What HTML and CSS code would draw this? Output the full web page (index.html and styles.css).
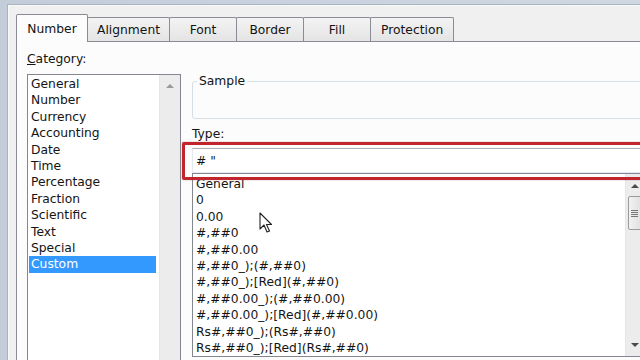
FILE: index.html
```html
<!DOCTYPE html>
<html lang="en">
<head>
  <meta charset="UTF-8" />
  <title>Format Cells</title>
  <link rel="stylesheet" href="styles.css">
</head>
<body>
  <div class="frame">
    <div class="dialog">
      <div class="tabs">
        <div class="tab active">Number</div>
        <div class="tab">Alignment</div>
        <div class="tab">Font</div>
        <div class="tab">Border</div>
        <div class="tab">Fill</div>
        <div class="tab">Protection</div>
      </div>

      <div class="panel">
        <div class="category">
          <div class="label"><u>C</u>ategory:</div>
          <div class="listbox cat-list">
            <ul class="items">
              <li>General</li>
              <li>Number</li>
              <li>Currency</li>
              <li>Accounting</li>
              <li>Date</li>
              <li>Time</li>
              <li>Percentage</li>
              <li>Fraction</li>
              <li>Scientific</li>
              <li>Text</li>
              <li>Special</li>
              <li class="selected">Custom</li>
            </ul>
            <div class="scrollbar">
              <span class="arrow up"></span>
            </div>
          </div>
        </div>

        <div class="format">
          <fieldset class="sample">
            <legend>Sample</legend>
            <div class="sample-body"></div>
          </fieldset>

          <div class="label type-label">Type:</div>
          <div class="type-field">
            <input class="type-input" type="text" value='# "'>
            <div class="marker"></div>
          </div>

          <div class="listbox type-list">
            <ul class="items">
              <li>General</li>
              <li>0</li>
              <li>0.00</li>
              <li>#,##0</li>
              <li>#,##0.00</li>
              <li>#,##0_);(#,##0)</li>
              <li>#,##0_);[Red](#,##0)</li>
              <li>#,##0.00_);(#,##0.00)</li>
              <li>#,##0.00_);[Red](#,##0.00)</li>
              <li>Rs#,##0_);(Rs#,##0)</li>
              <li>Rs#,##0_);[Red](Rs#,##0)</li>
            </ul>
            <div class="scrollbar">
              <span class="arrow up"></span>
              <span class="thumb"><i></i><i></i><i></i><i></i></span>
              <span class="arrow down"></span>
            </div>
          </div>
        </div>
      </div>
    </div>

    <svg class="cursor" width="14" height="22" viewBox="0 0 14 22">
      <path d="M1 1 L1 17 L5 13 L8 20 L10.5 19 L7.5 12.5 L12.5 12.5 Z" fill="#fff" stroke="#222" stroke-width="1.1" stroke-linejoin="round"/>
    </svg>
  </div>
</body>
</html>
```

FILE: styles.css
```css
body {
  margin: 0;
  width: 640px;
  height: 360px;
  overflow: hidden;
  font-family: "DejaVu Sans", "Liberation Sans", sans-serif;
  font-size: 12.3px;
  color: #141414;
  background: #c8d1dd;
}

.frame {
  position: relative;
  height: 360px;
  padding: 4px 0 0 7px;
  box-sizing: border-box;
  background: linear-gradient(to right, #c3cdda, #cfd7e2);
}

.dialog {
  height: 100%;
  padding: 9px 0 0 8px;
  box-sizing: border-box;
  background: #f0f0f0;
  border-left: 1px solid #a9b3bf;
  border-top: 1px solid #a9b3bf;
  box-shadow: inset 1px 1px 0 #fafafa;
}

/* tabs */
.tabs {
  display: flex;
  align-items: flex-end;
  height: 27px;
}

.tab {
  height: 24px;
  line-height: 25px;
  min-width: 68px;
  padding: 0 9px;
  box-sizing: border-box;
  text-align: center;
  border: 1px solid #898c95;
  border-bottom: none;
  margin-left: -1px;
  background: linear-gradient(#f3f3f3, #e4e4e4);
  border-radius: 2px 2px 0 0;
}

.tab:first-child {
  margin-left: 0;
}

.tab:last-child {
  padding: 0 10px;
}

.tab.active {
  height: 28px;
  line-height: 29px;
  width: 72px;
  margin-bottom: -1px;
  position: relative;
  z-index: 1;
  background: #fcfcfc;
}

/* panel */
.panel {
  display: flex;
  gap: 11px;
  height: 330px;
  padding: 10px 0 0 10px;
  box-sizing: border-box;
  background: #fcfcfc;
  border-top: 1px solid #898c95;
  border-left: 1px solid #898c95;
}

.label {
  height: 16px;
  line-height: 15px;
}

.category {
  width: 154px;
  flex: none;
}

.category .label {
  margin-bottom: 6px;
}

.listbox {
  display: flex;
  background: #fff;
  border: 1px solid #828790;
}

.cat-list {
  height: 300px;
}

.items {
  flex: 1;
  list-style: none;
  margin: 0;
  padding: 1px 3px 0 1px;
}

.items li {
  line-height: 16.4px;
  padding-left: 2px;
  white-space: nowrap;
}

.items li.selected {
  background: #3399ff;
  color: #fff;
}

.scrollbar {
  width: 20px;
  flex: none;
  display: flex;
  flex-direction: column;
  align-items: center;
  background: #ececec;
  border-left: 1px solid #e6e6e6;
}

.arrow {
  width: 0;
  height: 0;
  border-left: 4px solid transparent;
  border-right: 4px solid transparent;
}

.arrow.up {
  margin-top: 9px;
  border-bottom: 4px solid #9a9a9a;
}

.arrow.down {
  margin-top: auto;
  margin-bottom: 9px;
  border-top: 4px solid #4a4a4a;
}

/* right side */
.format {
  width: 452px;
  flex: none;
}

.sample {
  margin: 21px 0 0;
  padding: 0 0 0 4px;
  border: 1px solid #d5dfe5;
  border-radius: 3px;
}

.sample legend {
  padding: 0 2px;
  line-height: 16px;
}

.sample-body {
  height: 29px;
}

.type-label {
  margin-top: 8px;
}

.type-field {
  position: relative;
  margin-top: 5px;
}

.type-input {
  display: block;
  width: 100%;
  height: 25px;
  margin: 0;
  padding: 0 3px;
  box-sizing: border-box;
  font: inherit;
  color: #141414;
  background: #fff;
  border: 1px solid #e3e9ef;
  border-top-color: #abadb3;
  outline: none;
}

.marker {
  position: absolute;
  top: -6px;
  left: -10px;
  right: -12px;
  bottom: -7px;
  border: 3px solid #c1262d;
  border-radius: 2px;
  box-shadow: 0 0 1px #8e1a1f;
}

.type-list {
  height: 184px;
  box-sizing: border-box;
}

.type-list .items {
  padding: 2px 0 0 1px;
}

.type-list .scrollbar {
  width: 17px;
}

.type-list .arrow.up {
  margin-top: 10px;
  border-bottom-color: #4a4a4a;
}

.thumb {
  display: flex;
  flex-direction: column;
  justify-content: center;
  align-items: center;
  gap: 1px;
  width: 14px;
  height: 34px;
  margin-top: 8px;
  box-sizing: border-box;
  border: 1px solid #9b9b9b;
  border-radius: 2px;
  background: linear-gradient(to right, #f2f2f2, #e0e0e0);
}

.thumb i {
  width: 7px;
  height: 1px;
  background: #777;
}

.cursor {
  position: absolute;
  left: 259px;
  top: 212px;
}
```
